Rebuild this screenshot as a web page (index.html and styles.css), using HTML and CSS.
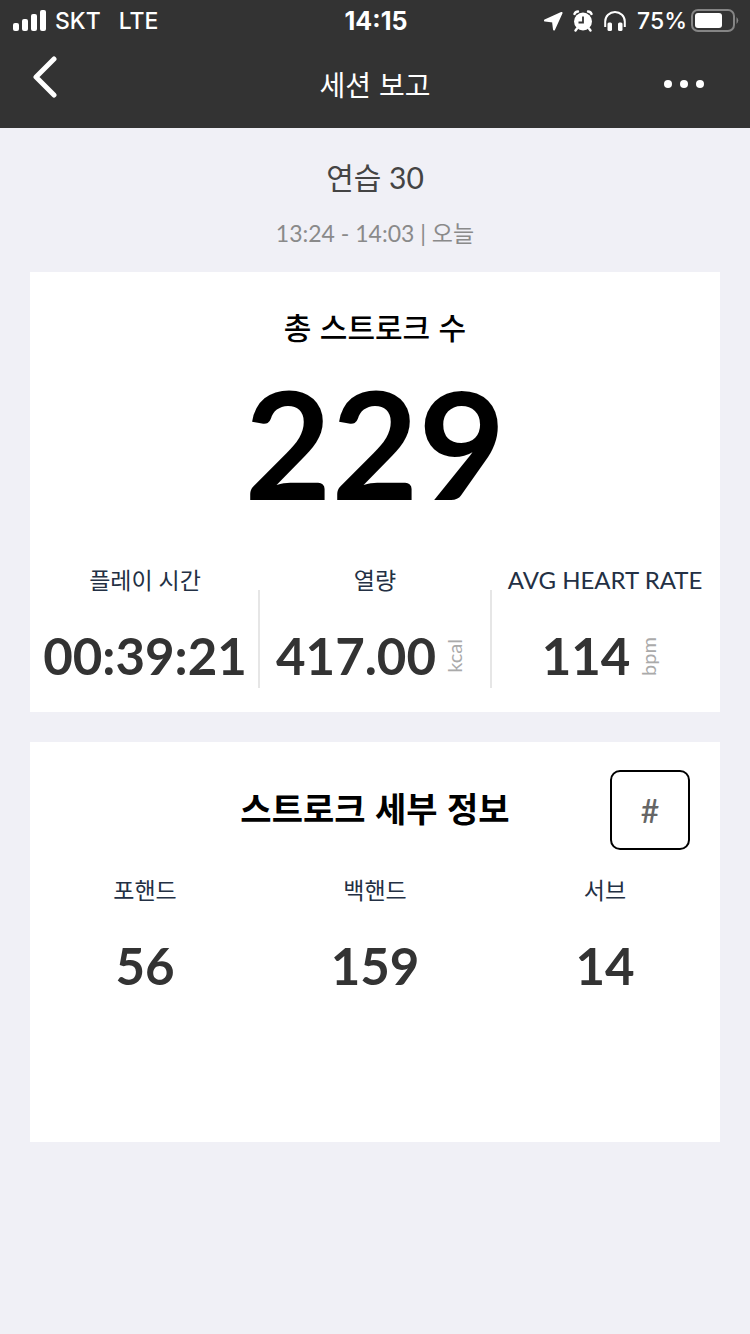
FILE: index.html
```html
<!DOCTYPE html>
<html lang="ko">
<head>
<meta charset="utf-8">
<meta name="viewport" content="width=device-width, initial-scale=1">
<title>세션 보고</title>
<link rel="stylesheet" href="styles.css">
</head>
<body>
<header class="top">
  <div class="status">
    <div class="status-left">
      <svg class="signal" width="34" height="22" viewBox="0 0 34 22" aria-hidden="true"><g fill="#fff"><rect x="0" y="13" width="6" height="8" rx="2"/><rect x="9" y="9" width="6" height="12" rx="2"/><rect x="18" y="4" width="6" height="17" rx="2"/><rect x="27" y="0" width="6" height="21" rx="2"/></g></svg>
      <span>SKT</span>
      <span class="network">LTE</span>
    </div>
    <time class="clock">14:15</time>
    <div class="status-right">
      <svg width="19" height="20" viewBox="0 0 19 20" aria-hidden="true"><path d="M17.500 2 L1 9.500 L9 10.500 L10 18.500 Z" fill="#fff" stroke="#fff" stroke-width="2" stroke-linejoin="round"/></svg>
      <svg class="alarm" width="20" height="22" viewBox="0 0 20 22" aria-hidden="true"><circle cx="10" cy="11.500" r="9" fill="#fff"/><path d="M1.500 4 Q2.500 1.500 5 1.500 M18.500 4 Q17.500 1.500 15 1.500 M4 18.500 L2.500 20.500 M16 18.500 L17.500 20.500" stroke="#fff" stroke-width="2.400" stroke-linecap="round" fill="none"/><path d="M10 6.500 V12.500 H5.500" stroke="#333" stroke-width="1.800" fill="none"/></svg>
      <svg class="headphones" width="22" height="20" viewBox="0 0 22 20" aria-hidden="true"><path d="M1.200 16 V10.500 A9.800 9.500 0 0 1 20.800 10.500 V16" fill="none" stroke="#fff" stroke-width="2"/><rect x="3.500" y="11.500" width="4.500" height="8.500" rx="1.500" fill="#fff"/><rect x="14" y="11.500" width="4.500" height="8.500" rx="1.500" fill="#fff"/></svg>
      <span class="percent">75%</span>
      <svg class="battery" width="48" height="24" viewBox="0 0 48 24" aria-hidden="true"><rect x="1" y="1" width="42" height="21" rx="6" fill="none" stroke="#858585" stroke-width="2"/><rect x="4" y="4" width="27" height="15" rx="3" fill="#fff"/><path d="M45.500 8 Q49 11.500 45.500 15 Z" fill="#858585"/></svg>
    </div>
  </div>
  <nav class="navbar">
    <button class="nav-button back" type="button" aria-label="뒤로"><svg width="24" height="42" viewBox="0 0 24 42"><path d="M21 3 L3 21 L21 39" fill="none" stroke="#fff" stroke-width="5" stroke-linecap="round" stroke-linejoin="round"/></svg></button>
    <h1 class="nav-title">세션 보고</h1>
    <button class="nav-button more" type="button" aria-label="더 보기"><svg width="40" height="10" viewBox="0 0 40 10"><g fill="#fff"><circle cx="4" cy="5" r="4"/><circle cx="20" cy="5" r="4"/><circle cx="36" cy="5" r="4"/></g></svg></button>
  </nav>
</header>
<main class="content">
  <section class="session">
    <h2 class="session-name">연습 30</h2>
    <p class="session-time">13:24 - 14:03 | 오늘</p>
  </section>
  <section class="card summary">
    <h2 class="summary-title">총 스트로크 수</h2>
    <p class="total">229</p>
    <dl class="stats divided">
      <div class="stat"><dt>플레이 시간</dt><dd>00:39:21</dd></div>
      <div class="stat"><dt>열량</dt><dd>417.00<span class="unit">kcal</span></dd></div>
      <div class="stat"><dt lang="en">AVG HEART RATE</dt><dd>114<span class="unit">bpm</span></dd></div>
    </dl>
  </section>
  <section class="card details">
    <div class="details-head">
      <h2 class="details-title">스트로크 세부 정보</h2>
      <button class="mode" type="button">#</button>
    </div>
    <dl class="stats">
      <div class="stat"><dt>포핸드</dt><dd>56</dd></div>
      <div class="stat"><dt>백핸드</dt><dd>159</dd></div>
      <div class="stat"><dt>서브</dt><dd>14</dd></div>
    </dl>
  </section>
</main>
</body>
</html>
```
FILE: styles.css
```css
* { box-sizing: border-box; }
body {
  margin: 0;
  min-height: 100vh;
  background: #f0f0f6;
  color: #333;
  font-family: Lato, "Noto Sans CJK KR", sans-serif;
}
h1, h2, p, dl, dd { margin: 0; font-weight: 400; }
button { padding: 0; border: 0; background: none; font: inherit; cursor: pointer; }
svg { display: block; flex: none; }

.top { background: #333; color: #fff; }
.status {
  display: grid;
  grid-template-columns: 1fr auto 1fr;
  align-items: center;
  height: 40px;
  padding: 0 11px 0 13px;
  font: 500 23px/42px Inter, sans-serif;
}
.status-left, .status-right { display: flex; align-items: center; }
.status-left { gap: 8px; }
.status-right { justify-content: flex-end; }
.network { margin-left: 10px; }
.clock { font-size: 25px; font-weight: 700; }
.alarm { margin-left: 10px; }
.headphones { margin: 0 11px; }
.battery { margin-left: 4px; }

.navbar {
  display: grid;
  grid-template-columns: 1fr auto 1fr;
  align-items: center;
  height: 88px;
  padding: 0 46px 0 33px;
}
.nav-title { font: 400 28px/40px "Noto Sans CJK KR", sans-serif; padding-left: 13px; }
.back { justify-self: start; padding-bottom: 14px; }
.more { justify-self: end; }

.content { padding: 0 30px 30px; }
.session { padding: 28px 0 22px; text-align: center; }
.session-name { color: #444; font-size: 30px; line-height: 42px; }
.session-time { margin-top: 18px; color: #8a8a8a; font-size: 23px; line-height: 34px; }

.card { background: #fff; }
.card + .card { margin-top: 30px; }
.summary { padding: 32px 0 24px; text-align: center; }
.summary-title { color: #000; font: 500 30px/44px "Noto Sans CJK KR", sans-serif; }
.total { margin-top: 4px; color: #000; font-size: 150px; font-weight: 700; line-height: 180px; }

.stats { display: grid; grid-template-columns: repeat(3, 1fr); text-align: center; }
.summary .stats { margin-top: 28px; }
.stat { position: relative; }
.stat dt { color: #233044; font-size: 23px; line-height: 40px; white-space: nowrap; }
.stat dt:lang(en) { font-size: 24px; }
.stat dd {
  display: flex;
  justify-content: center;
  align-items: center;
  margin-top: 24px;
  font-size: 51px;
  font-weight: 700;
  line-height: 64px;
}
.divided .stat:nth-child(2)::before,
.divided .stat:nth-child(2)::after {
  content: "";
  position: absolute;
  top: 30px;
  bottom: 0;
  width: 2px;
  background: #e6e6e6;
}
.divided .stat:nth-child(2)::before { left: -2px; }
.divided .stat:nth-child(2)::after { right: -2px; }
.unit {
  margin: 0 8px 0 6px;
  color: #aaa;
  font-size: 20px;
  font-weight: 400;
  line-height: 24px;
  writing-mode: vertical-rl;
  transform: rotate(180deg);
}

.details { min-height: 400px; padding-top: 28px; }
.details-head {
  display: grid;
  grid-template-columns: 80px 1fr 80px;
  align-items: center;
  padding: 0 30px;
}
.details-title {
  grid-column: 2;
  padding-bottom: 4px;
  color: #000;
  font: 700 34px/48px "Noto Sans CJK KR", sans-serif;
  text-align: center;
}
.mode {
  height: 80px;
  border: 2px solid #000;
  border-radius: 10px;
  color: #666;
  font-size: 32px;
  font-weight: 500;
}
.details .stats { margin-top: 20px; }
```
